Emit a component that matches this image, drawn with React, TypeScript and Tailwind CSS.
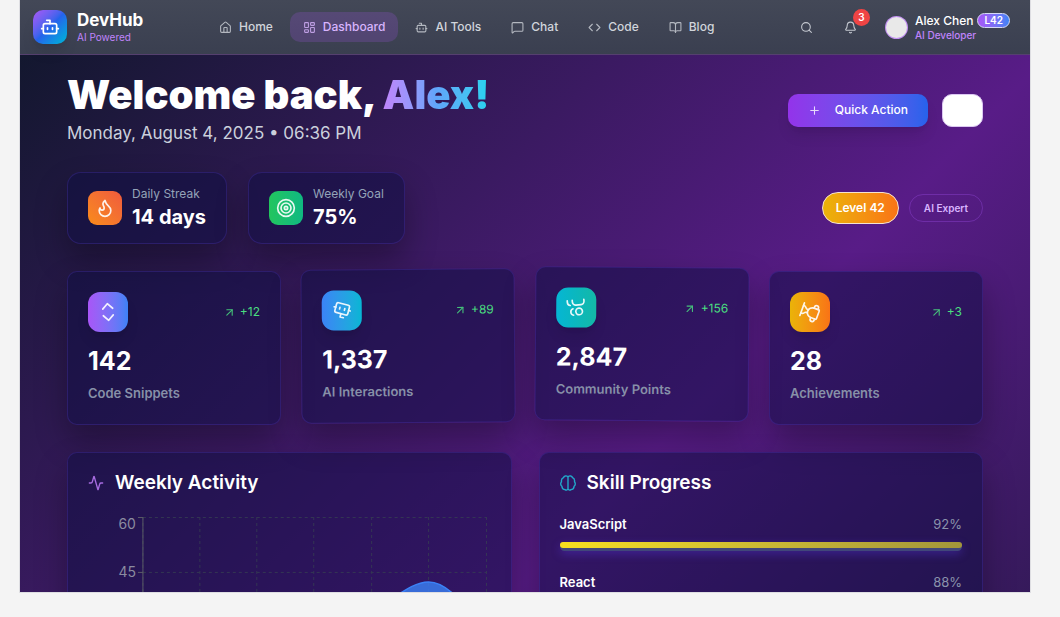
import React from "react";
import {
  Activity,
  ArrowUpRight,
  Bell,
  BookOpen,
  Bot,
  Code,
  Flame,
  House,
  LayoutDashboard,
  MessageSquare,
  Plus,
  Search,
  Target,
  Trophy,
  Users,
  type LucideIcon,
} from "lucide-react";

const navItems: { label: string; icon: LucideIcon; active?: boolean }[] = [
  { label: "Home", icon: House },
  { label: "Dashboard", icon: LayoutDashboard, active: true },
  { label: "AI Tools", icon: Bot },
  { label: "Chat", icon: MessageSquare },
  { label: "Code", icon: Code },
  { label: "Blog", icon: BookOpen },
];

const surface =
  "border border-[#5b3fd6]/25 bg-[#0d0d42]/50 shadow-[0_16px_32px_rgba(0,0,0,0.3)]";

const summaries = [
  { label: "Daily Streak", value: "14 days", icon: Flame, tile: "bg-linear-to-tr from-[#f98b16] to-[#ef5a3c]" },
  { label: "Weekly Goal", value: "75%", icon: Target, tile: "bg-linear-to-r from-[#22c55e] to-[#10b981]" },
];

const stats = [
  {
    label: "Code Snippets",
    value: "142",
    change: "+12",
    icon: Code,
    tile: "from-[#a855f7] to-[#3b82f6]",
    spin: "rotate-[85deg]",
    float: "",
  },
  {
    label: "AI Interactions",
    value: "1,337",
    change: "+89",
    icon: Bot,
    tile: "from-[#3b82f6] to-[#06b6d4]",
    spin: "rotate-[195deg]",
    float: "-translate-y-[2px] rotate-[-0.4deg]",
  },
  {
    label: "Community Points",
    value: "2,847",
    change: "+156",
    icon: Users,
    tile: "from-[#06b6d4] to-[#14b8a6]",
    spin: "rotate-[174deg]",
    float: "-translate-y-[4px] rotate-[0.4deg]",
  },
  {
    label: "Achievements",
    value: "28",
    change: "+3",
    icon: Trophy,
    tile: "from-[#eab308] to-[#f97316]",
    spin: "rotate-[110deg]",
    float: "",
  },
];

const skills = [
  { name: "JavaScript", level: 92, bar: "from-[#f7df1e] to-[#a3963a]" },
  { name: "React", level: 88, bar: "from-[#61dafb] to-[#4a8fb0]" },
];

function Header() {
  return (
    <header className="flex items-center justify-between border-b border-[#55406f] bg-linear-to-b from-[#434857] to-[#3a3f50] px-[13px] h-[55px] shrink-0">
      <div className="flex items-center gap-[10px]">
        <div className="flex size-[34px] items-center justify-center rounded-[10px] bg-linear-to-br from-[#a855f7] via-[#2563eb] to-[#06b6d4] shadow-lg">
          <Bot className="size-5 text-white" strokeWidth={2} />
        </div>
        <div>
          <div className="text-[17px] leading-5 font-bold text-white">DevHub</div>
          <div className="text-[10px] leading-[14px] text-[#c084fc]">AI Powered</div>
        </div>
      </div>

      <nav className="flex items-center gap-1">
        {navItems.map(({ label, icon: Icon, active }) => (
          <a
            key={label}
            href="#"
            className={
              "flex h-[30px] items-center gap-[7px] rounded-[10px] px-[13px] text-[12px] font-medium " +
              (active ? "bg-[#a855f7]/20 text-[#d8b4fe]" : "text-[#d1d5db]")
            }
          >
            <Icon className="size-[13px] opacity-80" />
            {label}
          </a>
        ))}
      </nav>

      <div className="flex items-center gap-[11px]">
        <button aria-label="Search" className="flex size-[33px] items-center justify-center text-[#c4c8d0]">
          <Search className="size-[13px]" />
        </button>
        <button aria-label="Notifications" className="relative flex size-[33px] items-center justify-center text-[#c4c8d0]">
          <Bell className="size-[13px]" />
          <span className="absolute -top-[2px] right-[-3px] flex size-[17px] items-center justify-center rounded-full bg-[#ef4444] text-[10px] font-semibold text-white">
            3
          </span>
        </button>
        <button className="flex items-center gap-[7px] px-[7px] text-left">
          <span className="size-[23px] rounded-full border border-[#a855f7]/60 bg-[#e9e9e9]" />
          <span>
            <span className="flex items-center gap-1 text-[12px] leading-[15px] font-medium text-white">
              Alex Chen
              <span className="rounded-full border border-[#d5d8f5] bg-linear-to-r from-[#a855f7] to-[#3b82f6] px-[6px] text-[10px] leading-[13px] font-semibold">
                L42
              </span>
            </span>
            <span className="block text-[10px] leading-[14px] font-medium text-[#c084fc]">AI Developer</span>
          </span>
        </button>
      </div>
    </header>
  );
}

function WeeklyActivity() {
  const columns = [55, 112, 169, 226, 284, 341, 399];
  return (
    <section className={"rounded-[10px] p-5 pt-[18px] " + surface}>
      <h2 className="flex items-center gap-[11px] text-[19px] leading-6 font-semibold text-white">
        <Activity className="size-4 text-[#a66be0]" />
        Weekly Activity
      </h2>
      <svg viewBox="0 0 403 260" className="mt-[17px] w-full" role="img" aria-label="Weekly activity chart">
        <g stroke="#374151" strokeDasharray="3 3" opacity="0.75">
          {columns.map((x) => (
            <line key={x} x1={x} x2={x} y1="5" y2="225" />
          ))}
          {[5, 60, 115, 170, 225].map((y) => (
            <line key={y} x1="55" x2="399" y1={y + 0.5} y2={y + 0.5} />
          ))}
        </g>
        <path
          d="M55 225V180C93 170 131 150 169 150S250 115 284 98C303 91 322 70 341 70C360 70 379 92 399 128V225Z"
          fill="#3b82f6"
          fillOpacity="0.8"
        />
        <path
          d="M55 180C93 170 131 150 169 150S250 115 284 98C303 91 322 70 341 70C360 70 379 92 399 128"
          fill="none"
          stroke="#3b82f6"
          strokeWidth="1.5"
        />
        <g stroke="#5b5a68">
          <line x1="55" x2="55" y1="5" y2="225" />
          <line x1="50" x2="55" y1="5.5" y2="5.5" />
          <line x1="50" x2="55" y1="60.5" y2="60.5" />
        </g>
        <g fill="#8b8ba0" fontSize="14" textAnchor="end" fontFamily="Inter, sans-serif">
          <text x="48" y="17">60</text>
          <text x="48" y="65">45</text>
        </g>
      </svg>
    </section>
  );
}

function SkillProgress() {
  return (
    <section className={"rounded-[10px] p-5 pt-[18px] " + surface}>
      <h2 className="flex items-center gap-[11px] text-[19px] leading-6 font-semibold text-white">
        <svg viewBox="0 0 16 16" className="size-4" fill="none" stroke="#22a7c9" strokeWidth="1.4">
          <path d="M8 2C6.5.2 4 .8 3.4 2.7 1.7 3.6 1.2 5.4 1.5 6.8.3 8.2.5 10.200 1.900 11.300 2 13.400 3.400 14.600 5 14.600 6.300 15.700 8 14.800 8 13.500V2C9.500.2 12 .8 12.600 2.700 14.300 3.600 14.800 5.400 14.500 6.800 15.700 8.200 15.500 10.200 14.100 11.300 14 13.400 12.600 14.600 11 14.600 9.700 15.700 8 14.800 8 13.500" />
        </svg>
        Skill Progress
      </h2>
      <ul className="mt-[19px]">
        {skills.map((skill) => (
          <li key={skill.name} className="h-[58px]">
            <div className="flex items-center justify-between text-[13px] leading-5">
              <span className="font-semibold text-white">{skill.name}</span>
              <span className="text-[#8b93ab]">{skill.level}%</span>
            </div>
            <div className="mt-2 h-[9px] rounded-full bg-[#41477a] shadow-[0_3px_10px_rgba(90,60,230,0.4)]">
              <div className={"h-[6px] rounded-full bg-linear-to-r " + skill.bar} />
            </div>
          </li>
        ))}
      </ul>
    </section>
  );
}

export default function App() {
  return (
    <div className="flex h-screen flex-col overflow-hidden bg-[#f4f4f4] pr-[30px] pb-[25px] pl-5 font-['Inter',sans-serif]">
      <div className="flex min-h-0 flex-1 flex-col overflow-hidden bg-[linear-gradient(135deg,#0f172a_0px,#581c87_767px,#0f172a_1534px)] shadow-[0_0_0_1px_#dedee2]">
        <Header />
        <main className="px-[47px] pt-5">
          <div className="flex items-center justify-between">
            <div>
              <h1 className="text-[40px] leading-10 font-black text-white">
                Welcome back,{" "}
                <span className="bg-linear-to-r from-[#c084fc] via-[#60a5fa] to-[#22d3ee] bg-clip-text text-transparent">
                  Alex!
                </span>
              </h1>
              <p className="mt-[6px] text-[17px] leading-6 text-[#cbd0dc]">Monday, August 4, 2025 • 06:36 PM</p>
            </div>
            <div className="flex items-center gap-[14px]">
              <button className="flex h-[33px] items-center gap-[14px] rounded-[10px] bg-linear-to-r from-[#9333ea] to-[#2563eb] px-5 text-[12px] font-medium text-white shadow-lg">
                <Plus className="size-[13px] opacity-80" />
                Quick Action
              </button>
              <button aria-label="Settings" className="h-[33px] w-[41px] rounded-[10px] border border-[#dcc8f2] bg-white" />
            </div>
          </div>

          <div className="mt-[27px] flex items-center justify-between">
            <div className="flex gap-[21px]">
              {summaries.map(({ label, value, icon: Icon, tile }) => (
                <div key={label} className={"flex h-[72px] items-center gap-[10px] rounded-[14px] px-5 " + surface}>
                  <div className={"flex size-[34px] items-center justify-center rounded-[9px] " + tile}>
                    <Icon className="size-5 text-white opacity-90" />
                  </div>
                  <div>
                    <div className="text-[12px] leading-[18px] text-[#94a3b8]">{label}</div>
                    <div className="text-[20px] leading-7 font-bold text-white">{value}</div>
                  </div>
                </div>
              ))}
            </div>
            <div className="flex items-center gap-[10px]">
              <span className="flex h-8 items-center rounded-full border border-[#f5e3d0] bg-linear-to-r from-[#eab308] to-[#f97316] px-[13px] text-[12px] font-semibold text-white">
                Level 42
              </span>
              <span className="flex h-7 items-center rounded-full border border-[#a855f7]/30 px-[14px] text-[10px] font-semibold text-[#d8b4fe]">
                AI Expert
              </span>
            </div>
          </div>

          <div className="mt-[27px] grid grid-cols-4 gap-5">
            {stats.map(({ label, value, change, icon: Icon, tile, spin, float }) => (
              <article key={label} className={"h-[154px] rounded-[10px] p-5 " + surface + " " + float}>
                <div className="flex items-center justify-between">
                  <div className={"flex size-10 items-center justify-center rounded-[12px] bg-linear-to-r shadow-lg " + tile}>
                    <Icon className={"size-5 text-white opacity-90 " + spin} />
                  </div>
                  <span className="flex items-center gap-1 text-[12px] text-[#4ade80]">
                    <ArrowUpRight className="size-[13px] opacity-85" />
                    {change}
                  </span>
                </div>
                <div className="mt-[13px] text-[25px] leading-8 font-bold text-white">{value}</div>
                <div className="mt-[6px] text-[13px] leading-5 font-semibold text-[#8790a8]">{label}</div>
              </article>
            ))}
          </div>

          <div className="mt-[27px] grid grid-cols-2 gap-[27px]">
            <WeeklyActivity />
            <SkillProgress />
          </div>
        </main>
      </div>
    </div>
  );
}
